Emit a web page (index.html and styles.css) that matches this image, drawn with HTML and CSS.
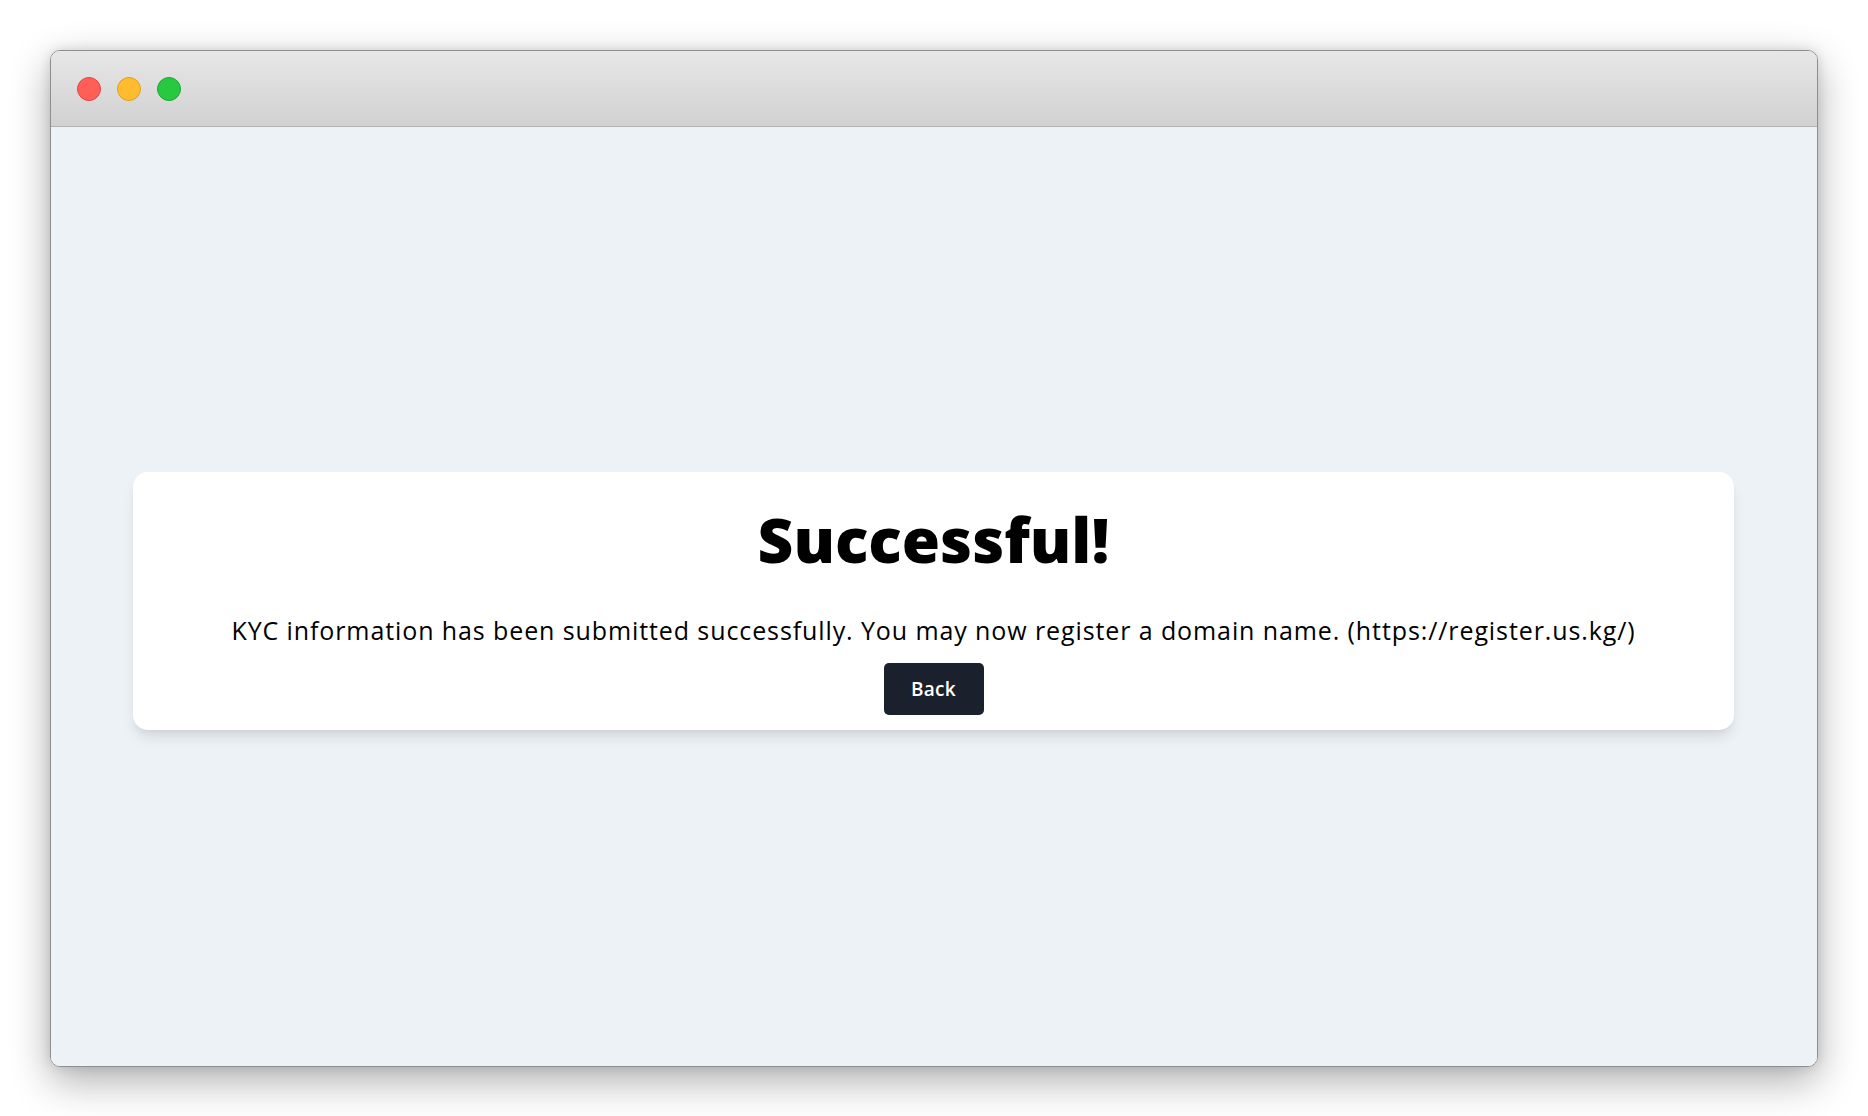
FILE: index.html
```html
<!DOCTYPE html>
<html lang="en">
<head>
  <meta charset="UTF-8" />
  <meta name="viewport" content="width=device-width, initial-scale=1.0"/>
  <title>KYC Submitted</title>
  <link rel="stylesheet" href="styles.css">
</head>
<body>
  <div class="window">
    <div class="titlebar">
      <span class="dot red"></span>
      <span class="dot yellow"></span>
      <span class="dot green"></span>
    </div>
    <div class="content">
      <div class="card">
        <h1>Successful!</h1>
        <p>KYC information has been submitted successfully. You may now register a domain name. (https://register.us.kg/)</p>
        <button onclick="history.back()">Back</button>
      </div>
    </div>
  </div>
</body>
</html>
```

FILE: styles.css
```css
html, body {
  height: 100%;
}
body {
  margin: 0;
  padding: 50px 50px 51px;
  box-sizing: border-box;
  background: #fff;
  font-family: 'Open Sans', sans-serif;
  color: #000;
}
.window {
  height: 100%;
  display: flex;
  flex-direction: column;
  border: 1px solid #8e8e8e;
  border-radius: 10px;
  overflow: hidden;
  box-shadow: 0 14px 40px rgba(0,0,0,0.32), 0 0 12px rgba(0,0,0,0.12);
}
.titlebar {
  height: 75px;
  display: flex;
  align-items: center;
  gap: 16px;
  padding-left: 26px;
  background: linear-gradient(#e7e7e7, #d1d1d1);
  border-bottom: 1px solid #b3b3b3;
  flex-shrink: 0;
}
.dot {
  width: 22px;
  height: 22px;
  border-radius: 50%;
  border: 1px solid;
}
.red {
  background: #ff5f57;
  border-color: #e2463f;
}
.yellow {
  background: #febc2e;
  border-color: #df9f1f;
}
.green {
  background: #28c840;
  border-color: #1ca92e;
}
.content {
  flex: 1;
  display: flex;
  align-items: center;
  justify-content: center;
  padding: 8px 83px 0 82px;
  background: #edf2f7;
}
.card {
  flex: 1;
  background: #fff;
  border-radius: 15px;
  padding: 29px 20px 15px;
  text-align: center;
  box-shadow: 0 10px 15px -3px rgba(0,0,0,0.1), 0 4px 6px -2px rgba(0,0,0,0.05);
}
h1 {
  margin: 0;
  font-size: 62px;
  line-height: 77px;
  font-weight: 800;
}
p {
  margin: 34px 0 15px;
  font-size: 25px;
  line-height: 36px;
  letter-spacing: 0.9px;
}
button {
  width: 100px;
  height: 52px;
  border: none;
  border-radius: 5px;
  background: #1a202c;
  color: #fff;
  font-family: 'Open Sans', sans-serif;
  font-size: 19px;
  font-weight: 600;
  letter-spacing: 0.3px;
  cursor: pointer;
}
```
